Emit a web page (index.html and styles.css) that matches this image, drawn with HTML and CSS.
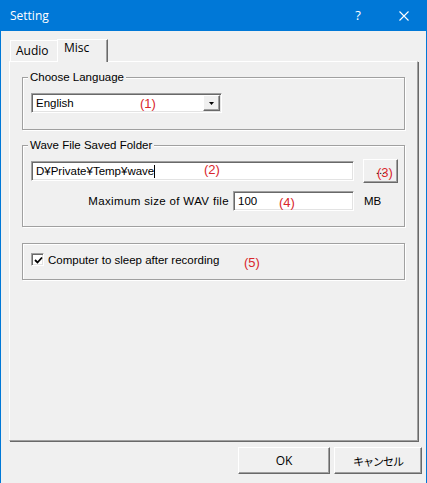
FILE: index.html
```html
<!DOCTYPE html>
<html>
<head>
<meta charset="utf-8">
<link rel="stylesheet" href="styles.css">
</head>
<body>
<div class="window">
  <div class="titlebar">
    <span class="title">Setting</span>
    <span class="tb-btn tb-help">?</span>
    <span class="tb-btn tb-close">
      <svg width="10" height="10" viewBox="0 0 10 10"><path d="M0.5 0.5 L9.5 9.5 M9.5 0.5 L0.5 9.5" stroke="#fff" stroke-width="1.1" fill="none"/></svg>
    </span>
  </div>
  <div class="tabs">
    <div class="tab">Audio</div>
    <div class="tab tab-active">Misc</div>
  </div>
  <div class="panel">
    <div class="group group-lang">
      <div class="legend">Choose Language</div>
      <div class="combo">
        <span class="combo-text">English</span>
        <span class="combo-btn"><svg width="5" height="3" viewBox="0 0 5 3"><polygon points="0,0 5,0 2.5,3" fill="#000"/></svg></span>
        <span class="note note-1">(1)</span>
      </div>
    </div>
    <div class="group group-wave">
      <div class="legend">Wave File Saved Folder</div>
      <div class="row row-path">
        <div class="field field-path">D¥Private¥Temp¥wave<span class="caret"></span><span class="note note-2">(2)</span></div>
        <div class="btn btn-browse">...<span class="note note-3">(3)</span></div>
      </div>
      <div class="row row-size">
        <span class="size-label">Maximum size of WAV file</span>
        <div class="field field-size">100<span class="note note-4">(4)</span></div>
        <span class="unit">MB</span>
      </div>
    </div>
    <div class="group group-sleep">
      <div class="row row-check">
        <span class="checkbox"><svg width="9" height="9" viewBox="0 0 9 9"><path d="M1 4 L3.5 6.5 L8 1.5" stroke="#000" stroke-width="1.8" fill="none"/></svg></span>
        <span class="check-label">Computer to sleep after recording</span>
        <span class="note note-5">(5)</span>
      </div>
    </div>
  </div>
  <div class="actions">
    <div class="btn btn-dlg btn-ok">OK</div>
    <div class="btn btn-dlg btn-cancel">キャンセル</div>
  </div>
</div>
</body>
</html>
```
FILE: styles.css
```css
* { box-sizing: border-box; }
html, body { margin: 0; padding: 0; }
body {
  background: #f0f0f0;
  font-family: "Liberation Sans", Arial, sans-serif;
  font-size: 11.5px;
  color: #000;
}
.window {
  width: 427px;
  height: 483px;
  border-left: 1px solid #0078d7;
  border-right: 1px solid #0078d7;
  display: flex;
  flex-direction: column;
  overflow: hidden;
}
.titlebar {
  height: 31px;
  margin: 0 -1px;
  padding-left: 10px;
  background: #0078d7;
  color: #fff;
  display: flex;
  align-items: center;
  font-family: "Open Sans", "Noto Sans", sans-serif;
  font-size: 12px;
  flex-shrink: 0;
}
.title { flex: 1; margin-top: -1px; }
.tb-btn {
  height: 31px;
  display: flex;
  align-items: center;
  justify-content: center;
}
.tb-help { width: 46px; font-size: 13px; margin-top: -1px; }
.tb-close { width: 46px; }

.tabs {
  display: flex;
  align-items: flex-end;
  margin: 8px 0 0 9px;
  font-family: "Open Sans", "Noto Sans", sans-serif;
  font-size: 12px;
  line-height: 16px;
}
.tab {
  width: 47px;
  height: 21px;
  padding: 2px 0 0 5px;
  border-top: 1px solid #fff;
  border-left: 1px solid #fff;
}
.tab-active {
  width: 51px;
  height: 23px;
  padding: 0 0 0 6px;
  margin-bottom: -1px;
  background: #f0f0f0;
  border-right: 1px solid #696969;
  box-shadow: inset -1px 0 0 #a0a0a0;
  position: relative;
  z-index: 1;
}

.panel {
  margin-left: 8px;
  width: 409px;
  height: 380px;
  border-top: 1px solid #fff;
  border-left: 1px solid #fff;
  border-right: 1px solid #a0a0a0;
  border-bottom: 1px solid #a0a0a0;
  box-shadow: 1px 1px 0 #696969;
  padding-top: 15px;
  flex-shrink: 0;
}
.group {
  margin-left: 12px;
  width: 383px;
  border: 1px solid #a0a0a0;
  box-shadow: inset 1px 1px 0 #fff, 1px 1px 0 #fff;
  padding: 0 6px 0 8px;
}
.legend {
  margin: -8px 0 0 -3px;
  padding: 0 2px;
  width: fit-content;
  background: #f0f0f0;
  line-height: 14px;
}
.group-lang { padding-bottom: 16px; }
.group-wave { margin-top: 15px; padding-bottom: 15px; }
.group-sleep { margin-top: 16px; padding-top: 9px; padding-bottom: 13px; }

.combo {
  position: relative;
  margin-top: 9px;
  width: 191px;
  height: 20px;
  background: #fff;
  border: 1px solid;
  border-color: #a0a0a0 #fff #fff #a0a0a0;
  box-shadow: inset 1px 1px 0 #696969, inset -1px -1px 0 #e3e3e3;
  display: flex;
  align-items: stretch;
  padding: 1px 1px 1px 1px;
}
.combo-text {
  flex: 1;
  padding-left: 3px;
  line-height: 16px;
}
.combo-btn {
  width: 17px;
  background: #f0f0f0;
  border: 1px solid;
  border-color: #fff #696969 #696969 #fff;
  box-shadow: inset -1px -1px 0 #a0a0a0;
  display: flex;
  align-items: center;
  justify-content: center;
  padding-top: 1px;
}
.combo-btn svg { display: block; }

.row { display: flex; align-items: center; }
.row-path { margin-top: 7px; height: 24px; gap: 9px; }
.row-size { margin-top: 8px; height: 20px; }

.field {
  position: relative;
  height: 20px;
  background: #fff;
  border: 1px solid;
  border-color: #a0a0a0 #fff #fff #a0a0a0;
  box-shadow: inset 1px 1px 0 #696969, inset -1px -1px 0 #e3e3e3;
  padding: 0 0 0 4px;
  line-height: 18px;
  display: flex;
  align-items: center;
}
.field-path { flex: 1; }
.caret {
  display: inline-block;
  width: 1px;
  height: 13px;
  background: #000;
  margin-left: 0;
}
.field-size { width: 121px; }
.size-label {
  flex: 1;
  text-align: right;
  margin-right: 4px;
  letter-spacing: 0.35px;
}
.unit { width: 44px; padding-left: 10px; }

.btn {
  position: relative;
  background: #f0f0f0;
  border: 1px solid;
  border-color: #fff #696969 #696969 #fff;
  box-shadow: inset -1px -1px 0 #a0a0a0;
  display: flex;
  align-items: center;
  justify-content: center;
}
.btn-browse {
  width: 35px;
  height: 24px;
  padding-bottom: 2px;
}

.row-check { position: relative; height: 13px; }
.checkbox {
  width: 13px;
  height: 13px;
  background: #fff;
  border: 1px solid;
  border-color: #a0a0a0 #fff #fff #a0a0a0;
  box-shadow: inset 1px 1px 0 #696969, inset -1px -1px 0 #e3e3e3;
  display: flex;
  align-items: center;
  justify-content: center;
  padding: 1px 0 0 1px;
}
.checkbox svg { display: block; }
.check-label { margin-left: 4px; }

.note {
  position: absolute;
  color: #d9262b;
  font-size: 13px;
  line-height: 14px;
  font-family: "Liberation Sans", Arial, sans-serif;
  white-space: nowrap;
}
.note-1 { left: 108px; top: 3px; }
.note-2 { left: 172px; top: 1px; }
.note-3 { left: 13px; top: 6px; }
.note-4 { left: 45px; top: 4px; }
.note-5 { left: 213px; top: 3px; }

.actions {
  display: flex;
  justify-content: flex-end;
  gap: 4px;
  margin-top: 6px;
  padding-right: 4px;
}
.btn-dlg {
  height: 27px;
  font-family: "Open Sans", "Noto Sans CJK JP", sans-serif;
  font-size: 12px;
}
.btn-ok { width: 92px; }
.btn-cancel {
  width: 88px;
  font-family: "Noto Sans CJK JP", sans-serif;
  font-size: 11px;
  letter-spacing: -1px;
}
```
